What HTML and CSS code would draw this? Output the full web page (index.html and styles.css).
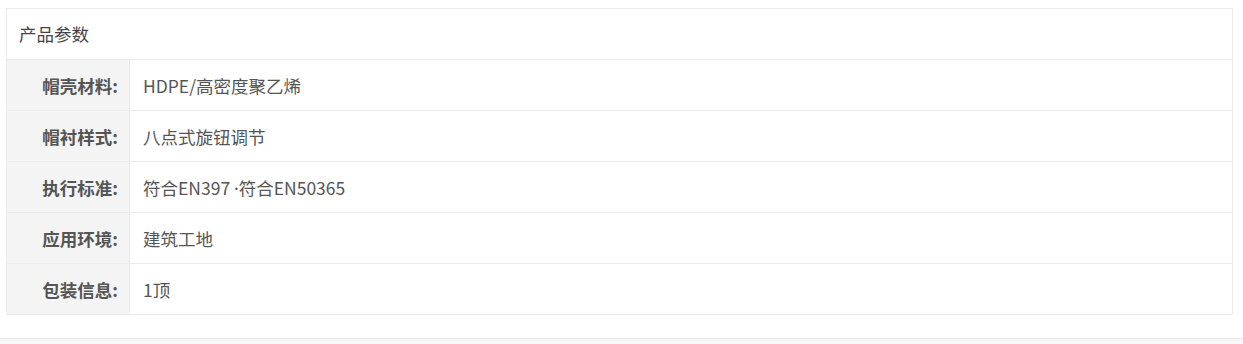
FILE: index.html
```html
<!DOCTYPE html>
<html lang="zh-CN">
<head>
    <meta charset="UTF-8">
    <meta name="viewport" content="width=device-width, initial-scale=1.0">
    <title>产品参数</title>
    <link rel="stylesheet" href="styles.css">
</head>
<body>
    <div class="page">
        <div class="param-box">
            <div class="param-title">产品参数</div>
            <table class="param-table">
                <tr>
                    <th>帽壳材料:</th>
                    <td>HDPE/高密度聚乙烯</td>
                </tr>
                <tr>
                    <th>帽衬样式:</th>
                    <td>八点式旋钮调节</td>
                </tr>
                <tr>
                    <th>执行标准:</th>
                    <td>符合EN397 <span class="dot">·</span>符合EN50365</td>
                </tr>
                <tr>
                    <th>应用环境:</th>
                    <td>建筑工地</td>
                </tr>
                <tr>
                    <th>包装信息:</th>
                    <td>1顶</td>
                </tr>
            </table>
        </div>
    </div>
    <!-- next section starts here -->
    <div class="next-section"></div>
</body>
</html>
```

FILE: styles.css
```css
body {
    margin: 0;
    background: #fff;
    font-family: "Microsoft YaHei", "Noto Sans CJK SC", "Noto Sans", sans-serif;
    font-size: 17.5px;
}

.page {
    padding: 8px 10px 0 6px;
}

.param-box {
    border: 1px solid #ebebeb;
}

.param-title {
    height: 50px;
    line-height: 50px;
    padding-left: 12px;
    color: #444;
    border-bottom: 1px solid #ebebeb;
}

.param-table {
    width: 100%;
    border-collapse: collapse;
}

.param-table tr {
    border-top: 1px solid #ebebeb;
}

.param-table tr:first-child {
    border-top: none;
}

.param-table th {
    width: 110px;
    height: 50px;
    padding: 0 11px 0 1px;
    text-align: right;
    font-weight: bold;
    color: #555;
    background: #f4f4f4;
    border-right: 1px solid #ebebeb;
}

.param-table td {
    height: 50px;
    padding: 0 0 0 13px;
    color: #555;
}

.param-table .dot {
    font-family: "Noto Sans", sans-serif;
}

.next-section {
    margin-top: 23px;
    height: 20px;
    background: #f7f7f7;
    border-top: 1px solid #e8e8e8;
}
```
